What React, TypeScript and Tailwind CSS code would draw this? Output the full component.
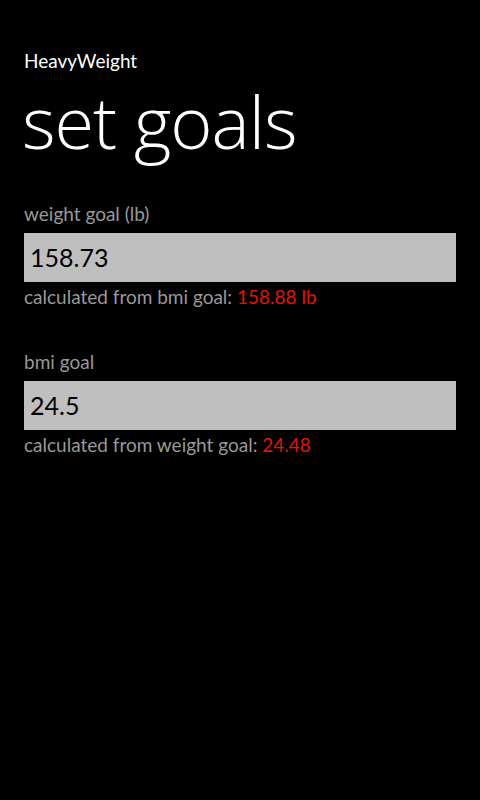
import React from 'react';

const body = { fontFamily: 'Lato, "Open Sans", sans-serif' };
const title = { fontFamily: '"Open Sans", "Noto Sans", sans-serif' };

interface GoalFieldProps {
  label: string;
  value: string;
  hint: string;
  calc: string;
}

const GoalField: React.FC<GoalFieldProps> = ({ label, value, hint, calc }) => (
  <div className="flex flex-col">
    <label className="text-[19px] leading-[28px] text-[#999999]">{label}</label>
    <div className="mt-[5px] h-[49px] bg-[#bfbfbf] flex items-center px-[6px]">
      <span className="text-[25px] leading-none text-black">{value}</span>
    </div>
    <p className="mt-[2px] text-[19px] leading-[26px] text-[#999999]">
      {hint} <span className="text-[#e51400]">{calc}</span>
    </p>
  </div>
);

export default function App() {
  return (
    <div className="min-h-screen w-full bg-black text-white px-6 pt-[50px]" style={body}>
      <div className="text-[19px] leading-[22px]">HeavyWeight</div>
      <h1 className="text-[72px] font-light leading-[98px] -ml-[2px] tracking-[-1px]" style={title}>
        set goals
      </h1>
      <div className="mt-[30px] flex flex-col gap-[38px]">
        <GoalField
          label="weight goal (lb)"
          value="158.73"
          hint="calculated from bmi goal:"
          calc="158.88 lb"
        />
        <GoalField
          label="bmi goal"
          value="24.5"
          hint="calculated from weight goal:"
          calc="24.48"
        />
      </div>
    </div>
  );
}
